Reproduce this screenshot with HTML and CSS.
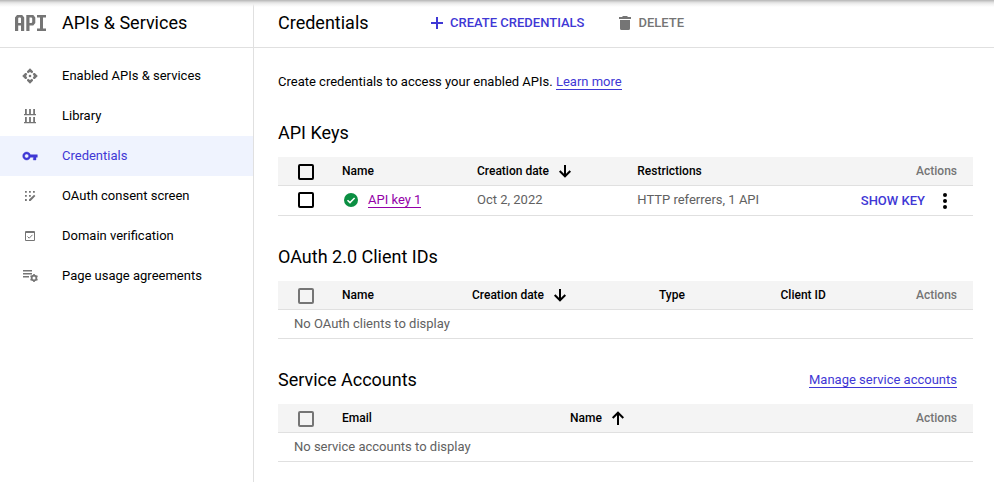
FILE: index.html
```html
<!DOCTYPE html>
<html lang="en">
<head>
<meta charset="utf-8">
<title>Credentials – APIs &amp; Services</title>
<link rel="stylesheet" href="styles.css">
</head>
<body>
<div class="app">
  <aside class="sidebar">
    <div class="side-head">
      <svg class="logo" width="32" height="16" viewBox="0 0 32 16" fill="#757575"><path fill-rule="evenodd" d="M0 16V2.500L2 0h5.200l2 2.500V16H6v-5.500H3.200V16zM3.200 8H6V3.200L5.400 2.500H3.800L3.200 3.200zM11.300 16V0h7l2 2.500V8l-2 2.500h-3.800V16zM14.500 8h2l.7-.7V3.200l-.7-.7h-2zM22 0h9v2.500h-3v11h3V16h-9v-2.500h3V2.500h-3z"/></svg>
      <span class="title">APIs &amp; Services</span>
    </div>
    <nav class="nav">
      <a class="nav-item">
        <svg class="nav-icon" viewBox="0 0 16 16"><path d="M8 .2l3 3v1L9.900 5.300 8 4.100 6.100 5.300 5 4.200v-1zM8 15.800l3-3v-1l-1.100-1.100L8 11.900l-1.900-1.200L5 11.800v1zM.2 8l3-3h1l1.100 1.100L4.100 8l1.200 1.900L4.200 11h-1zM15.800 8l-3-3h-1l-1.100 1.100L11.900 8l-1.200 1.900 1.100 1.100h1z"/><circle cx="8" cy="8" r="1.300"/></svg>
        <span>Enabled APIs &amp; services</span>
      </a>
      <a class="nav-item">
        <svg class="nav-icon" viewBox="0 0 16 16"><path d="M2 6h12v1.300H2zM3 1h1.800v5H3zM7.100 1h1.800v5H7.100zM11.200 1H13v5h-1.800zM2 14h12v1.300H2zM3 9h1.800v5H3zM7.100 9h1.800v5H7.100zM11.200 9H13v5h-1.800z"/></svg>
        <span>Library</span>
      </a>
      <a class="nav-item selected">
        <svg class="nav-icon" viewBox="0 0 24 24"><path stroke="currentColor" stroke-width=".6" d="M12.650 10C11.830 7.670 9.610 6 7 6c-3.310 0-6 2.690-6 6s2.690 6 6 6c2.610 0 4.830-1.670 5.650-4H17v4h4v-4h2v-4H12.650zM7 15c-1.660 0-3-1.340-3-3s1.340-3 3-3 3 1.340 3 3-1.340 3-3 3z"/></svg>
        <span>Credentials</span>
      </a>
      <a class="nav-item">
        <svg class="nav-icon" viewBox="0 0 16 16"><path d="M3 3h1.800v1.700H3zM7 3h1.800v1.700H7zM11 3h1.800v1.700H11zM3 7h1.800v1.700H3zM7 7h1.800v1.700H7zM3 11.100h1.800v1.800H3zM7 13v-1.600L12.100 6.800l1.300 1.300L8.600 13z"/></svg>
        <span>OAuth consent screen</span>
      </a>
      <a class="nav-item">
        <svg class="nav-icon" viewBox="0 0 16 16"><path fill-rule="evenodd" d="M4 3h8a1 1 0 0 1 1 1v8a1 1 0 0 1-1 1H4a1 1 0 0 1-1-1V4a1 1 0 0 1 1-1zM4 5v7h8V5z"/><path d="M5.500 8.500l1.700 1.700L10.500 6.800" fill="none" stroke="currentColor"/></svg>
        <span>Domain verification</span>
      </a>
      <a class="nav-item">
        <svg class="nav-icon" viewBox="0 0 16 16"><path d="M1 2h9v1.400H1zM1 5h9v1.400H1zM1 8h6v1.400H1z"/><circle cx="12" cy="10" r="2.400" fill="none" stroke="currentColor" stroke-width="1.800"/><path d="M11.200 6h1.600v1.500h-1.600zM11.200 12.500h1.600V14h-1.600zM8.100 8.600l.8-1.400 1.300.8-.8 1.300zM13.800 12l.8-1.300 1.300.7-.8 1.400zM15.900 8.600l-.8-1.400-1.300.8.8 1.300zM10.200 12l-.8-1.300-1.300.7.8 1.400z"/></svg>
        <span>Page usage agreements</span>
      </a>
    </nav>
  </aside>
  <main class="main">
    <header class="toolbar">
      <h1 class="title">Credentials</h1>
      <button class="action create"><svg width="12" height="12" viewBox="0 0 12 12"><path d="M5 0h2v5h5v2H7v5H5V7H0V5h5z"/></svg>CREATE CREDENTIALS</button>
      <button class="action delete"><svg width="12" height="14" viewBox="0 0 12 14"><path d="M4 0h4l1 1h3v2H0V1h3zM1 4h10v8.500a1.500 1.500 0 0 1-1.500 1.500h-7A1.500 1.500 0 0 1 1 12.500z"/></svg>DELETE</button>
    </header>
    <div class="content">
      <p class="intro">Create credentials to access your enabled APIs. <a class="link">Learn more</a></p>

      <section class="section keys">
        <div class="section-head"><h2 class="title">API Keys</h2></div>
        <div class="row head">
          <span class="check"></span><span>Name</span>
          <span class="sort">Creation date<svg width="14" height="14" viewBox="0 0 14 14"><path d="M7 1v11M1.700 7L7 12.300 12.300 7"/></svg></span>
          <span>Restrictions</span><span class="actions">Actions</span>
        </div>
        <div class="row item">
          <span class="check"></span>
          <span class="key-name"><svg width="14" height="14" viewBox="0 0 14 14"><circle cx="7" cy="7" r="7" fill="#0b8f42"/><path d="M3.500 7.200L6 9.600l4.600-4.700" fill="none" stroke="#fff" stroke-width="1.500"/></svg><a class="link visited">API key 1</a></span>
          <span>Oct 2, 2022</span><span>HTTP referrers, 1 API</span>
          <span class="key-actions"><button class="action show">SHOW KEY</button><svg width="4" height="16" viewBox="0 0 4 16"><circle cx="2" cy="2" r="2"/><circle cx="2" cy="8" r="2"/><circle cx="2" cy="14" r="2"/></svg></span>
        </div>
      </section>

      <section class="section clients">
        <div class="section-head"><h2 class="title">OAuth 2.0 Client IDs</h2></div>
        <div class="row head">
          <span class="check off"></span><span>Name</span>
          <span class="sort">Creation date<svg width="14" height="14" viewBox="0 0 14 14"><path d="M7 1v11M1.700 7L7 12.300 12.300 7"/></svg></span>
          <span>Type</span><span>Client ID</span><span class="actions">Actions</span>
        </div>
        <div class="empty">No OAuth clients to display</div>
      </section>

      <section class="section accounts">
        <div class="section-head"><h2 class="title">Service Accounts</h2><a class="link">Manage service accounts</a></div>
        <div class="row head">
          <span class="check off"></span><span>Email</span>
          <span class="sort">Name<svg width="14" height="14" viewBox="0 0 14 14"><path d="M7 14V2M1.700 7L7 1.700 12.300 7"/></svg></span>
          <span class="actions">Actions</span>
        </div>
        <div class="empty">No service accounts to display</div>
      </section>
    </div>
  </main>
</div>
</body>
</html>
```
FILE: styles.css
```css
* { box-sizing: border-box; }
body {
  margin: 0;
  font: 13px/20px Roboto, "Liberation Sans", sans-serif;
  color: #000;
  background: #fff;
}
h1, h2, p { margin: 0; }
svg { flex: none; display: block; }
.app {
  display: flex;
  height: 482px;
  overflow: hidden;
  position: relative;
}
.app::before {
  content: "";
  position: absolute;
  inset: 0 0 auto;
  height: 7px;
  background: linear-gradient(#b8b8b8, #c4c4c4 1px, #dcdcdc 2px, #f0f0f0 4px, rgba(255, 255, 255, 0));
}
.sidebar {
  width: 254px;
  flex: none;
  border-right: 1px solid #e0e0e0;
}
.side-head, .toolbar {
  display: flex;
  align-items: center;
  height: 48px;
  padding-bottom: 1px;
  border-bottom: 1px solid #e0e0e0;
}
.side-head { padding-left: 15px; gap: 15px; }
.title {
  font-size: 18px;
  font-weight: 400;
  line-height: 24px;
}
.nav { padding-top: 8px; }
.nav-item {
  display: flex;
  align-items: center;
  gap: 24px;
  height: 40px;
  padding-left: 22px;
}
.nav-icon { width: 16px; height: 16px; fill: currentColor; color: #757575; }
.selected { background: #eff3fe; color: #3f38d5; }
.selected .nav-icon { color: #3f38d5; }
.main { flex: 1; }
.toolbar { padding-left: 24px; }
.toolbar .title { width: 153px; }
.action {
  display: flex;
  align-items: center;
  gap: 7px;
  padding: 0;
  border: 0;
  background: none;
  font: 500 13px/20px Roboto, sans-serif;
  color: #3f38d5;
}
.action svg { fill: currentColor; }
.delete { margin-left: 35px; color: #757575; }
.content { padding: 24px 21px 0 24px; }
.link {
  color: #3f38d5;
  border-bottom: 1px solid currentColor;
}
.visited { color: #9400a8; }
.section-head {
  display: flex;
  align-items: center;
  justify-content: space-between;
  height: 24px;
  margin-bottom: 12px;
  padding-right: 16px;
}
.section-head .link { line-height: 15px; }
.section { margin-top: 29px; }
.row {
  display: grid;
  align-items: center;
  border-bottom: 1px solid #e0e0e0;
  padding-right: 16px;
}
.keys .row { grid-template-columns: 64px 135px 160.3px 1fr auto; }
.clients .row { grid-template-columns: 64px 130px 187px 121.5px 1fr auto; }
.accounts .row { grid-template-columns: 64px 228px 1fr auto; }
.head {
  height: 29px;
  background: #f4f4f4;
  font-size: 12px;
  font-weight: 500;
}
.item { height: 30px; padding-bottom: 1px; color: #616161; }
.check {
  width: 16px;
  height: 16px;
  margin-left: 20px;
  border: 2px solid #000;
  border-radius: 2px;
}
.head .check { margin-top: 1px; }
.off { border-color: #757575; }
.sort { display: flex; align-items: center; gap: 9px; }
.sort svg { fill: none; stroke: #000; stroke-width: 2; }
.actions { color: #757575; }
.key-name { display: flex; align-items: center; gap: 10px; padding-left: 2px; }
.key-name .link { line-height: 15px; }
.key-actions {
  display: flex;
  align-items: center;
  gap: 18px;
  margin-top: 2px;
  padding-right: 10px;
}
.empty {
  height: 29px;
  padding: 4px 16px;
  border-bottom: 1px solid #e0e0e0;
  color: #616161;
}
```
